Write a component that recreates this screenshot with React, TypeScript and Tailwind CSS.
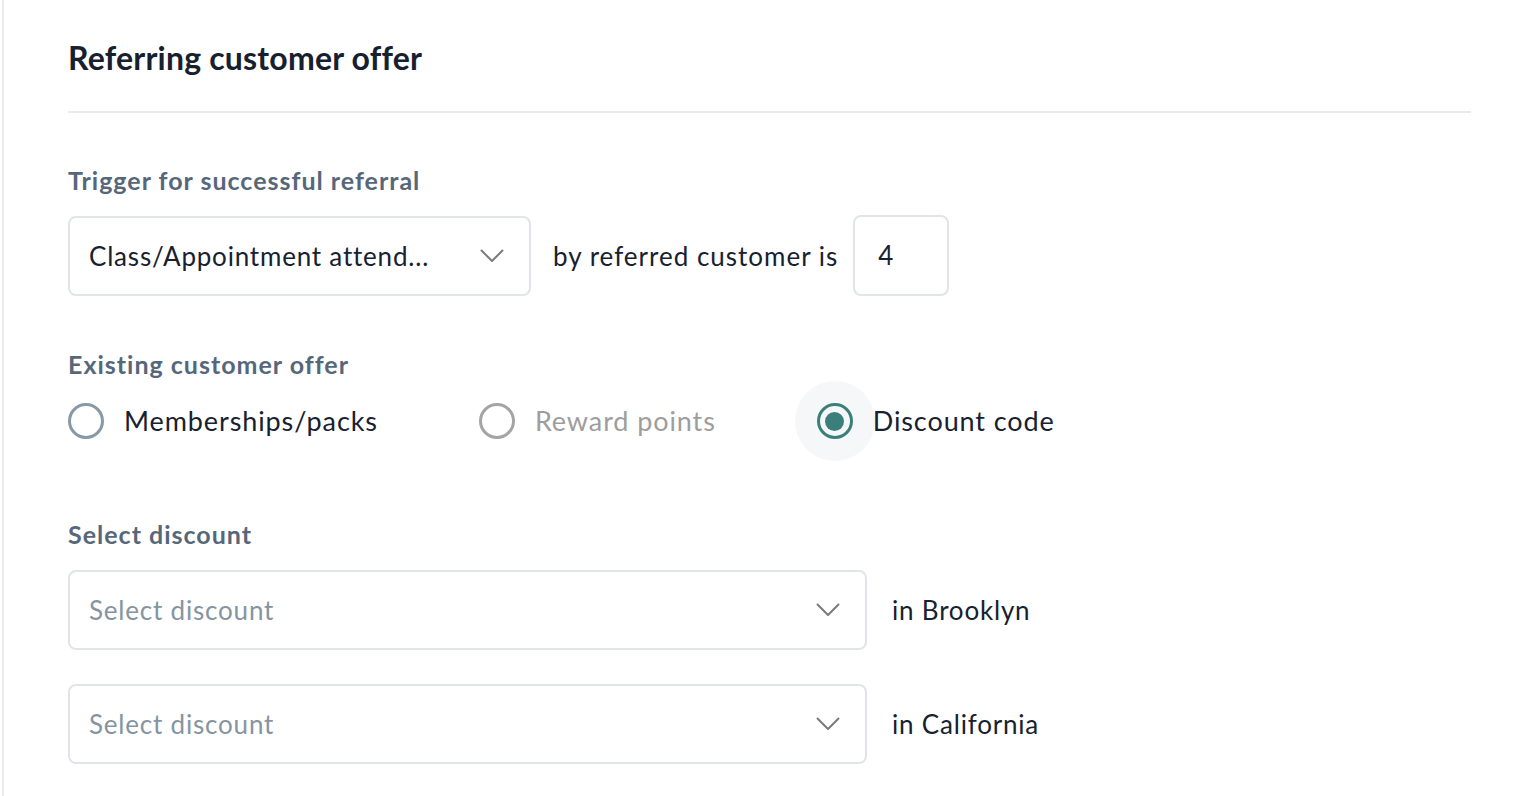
import { useState } from "react";

const Chevron = () => (
    <svg width="24" height="14" viewBox="0 0 24 14" fill="none">
        <path d="M1.5 1.5L12 12L22.5 1.5" stroke="#7b7b7b" strokeWidth="2" strokeLinecap="round" strokeLinejoin="round" />
    </svg>
);

function Radio({ label, checked, disabled }: { label: string; checked?: boolean; disabled?: boolean }) {
    const ring = checked ? "border-[#3b7f7c]" : disabled ? "border-[#a4a4a4]" : "border-[#8798a6]";
    const text = disabled ? "text-[#9d9d9d]" : "text-[#17212f]";
    return (
        <label className="flex items-center">
            <span className={`flex items-center justify-center w-[80px] h-[80px] -mx-[22px] rounded-full ${checked ? "bg-[#f6f7f9]" : ""}`}>
                <span className={`flex items-center justify-center w-[36px] h-[36px] rounded-full border-[3px] ${ring}`}>
                    {checked && <span className="w-[19px] h-[19px] rounded-full bg-[#3b7f7c]" />}
                </span>
            </span>
            <span className={`ml-[20px] text-[27px] leading-[32px] tracking-[0.9px] ${text}`}>{label}</span>
        </label>
    );
}

function Select({ value, placeholder, width }: { value?: string; placeholder?: string; width: string }) {
    return (
        <div className={`flex items-center justify-between ${width} h-[80px] pl-[19px] pr-[25px] rounded-[8px] border-2 border-[#e1e4e9] bg-white`}>
            <span className={`text-[26px] leading-[32px] tracking-[0.8px] ${value ? "text-[#17212f]" : "text-[#8594a1]"}`}>{value ?? placeholder}</span>
            <Chevron />
        </div>
    );
}

export default function App() {
    const [count] = useState("4");

    return (
        <div className="min-h-[796px] bg-white ml-[2px] border-l-2 border-[#ececf0] font-['Lato','Open_Sans',sans-serif]">
            <div className="pl-[64px] pr-[61px] pt-[38px]">
                {/* Header */}
                <h2 className="text-[32px] leading-[40px] font-bold tracking-[0.2px] text-[#17202e]">Referring customer offer</h2>
                <div className="mt-[33px] h-[2px] bg-[#e9e9ee]" />

                {/* Trigger */}
                <p className="mt-[51px] text-[25px] leading-[32px] font-bold tracking-[1px] text-[#56677a]">Trigger for successful referral</p>
                <div className="mt-[19px] flex items-center">
                    <Select value="Class/Appointment attend..." width="w-[463px]" />
                    <span className="ml-[22px] text-[26px] leading-[32px] tracking-[1px] text-[#17212f]">by referred customer is</span>
                    <div className="ml-[15px] flex items-center w-[96px] h-[81px] pl-[23px] rounded-[8px] border-2 border-[#e1e4e9] text-[26px] text-[#17212f]">
                        {count}
                    </div>
                </div>

                {/* Existing customer offer */}
                <p className="mt-[52px] text-[25px] leading-[32px] font-bold tracking-[1px] text-[#56677a]">Existing customer offer</p>
                <div className="mt-[1px] flex items-center gap-[101px] h-[80px]">
                    <Radio label="Memberships/packs" />
                    <Radio label="Reward points" disabled />
                    <Radio label="Discount code" checked />
                </div>

                {/* Select discount */}
                <p className="mt-[57px] text-[25px] leading-[32px] font-bold tracking-[1px] text-[#56677a]">Select discount</p>
                <div className="mt-[20px] flex flex-col gap-[34px]">
                    <div className="flex items-center">
                        <Select placeholder="Select discount" width="w-[799px]" />
                        <span className="ml-[25px] text-[26px] leading-[32px] tracking-[0.8px] text-[#17212f]">in Brooklyn</span>
                    </div>
                    <div className="flex items-center">
                        <Select placeholder="Select discount" width="w-[799px]" />
                        <span className="ml-[25px] text-[26px] leading-[32px] tracking-[0.8px] text-[#17212f]">in California</span>
                    </div>
                </div>
            </div>
        </div>
    );
}
